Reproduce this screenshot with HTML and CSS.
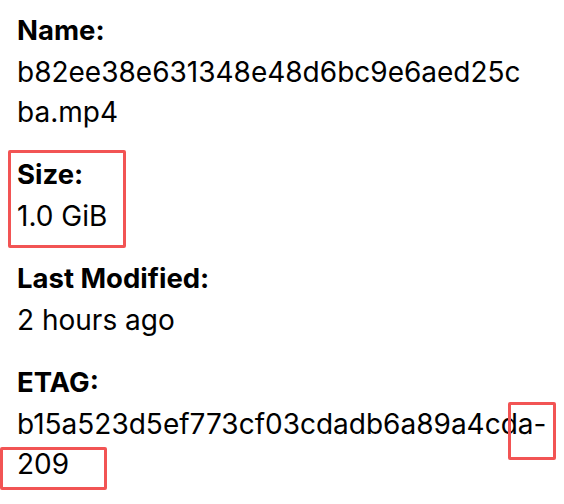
FILE: index.html
```html
<!DOCTYPE html>
<html>
<head>
<meta charset="utf-8">
<link rel="stylesheet" href="styles.css">
</head>
<body>
<div class="panel">
  <dl class="meta">
    <div class="item">
      <dt class="label">Name:</dt>
      <dd class="value value-file">b82ee38e631348e48d6bc9e6aed25cba.mp4</dd>
    </div>
    <div class="item">
      <dt class="label">Size:</dt>
      <dd class="value">1.0 GiB</dd>
    </div>
    <div class="item">
      <dt class="label">Last Modified:</dt>
      <dd class="value">2 hours ago</dd>
    </div>
    <div class="item">
      <dt class="label">ETAG:</dt>
      <dd class="value">b15a523d5ef773cf03cdadb6a89a4cda-209</dd>
    </div>
  </dl>
  <div class="mark mark-size"></div>
  <div class="mark mark-da"></div>
  <div class="mark mark-209"></div>
</div>
</body>
</html>
```
FILE: styles.css
```css
html, body {
  margin: 0;
  padding: 0;
  background: #ffffff;
}

body {
  font-family: Inter, "Noto Sans", sans-serif;
  color: #000000;
}

.panel {
  position: relative;
  width: 564px;
  height: 504px;
  overflow: hidden;
}

.meta {
  margin: 0;
  padding: 10px 0 0 17px;
  width: 536px;
  display: flex;
  flex-direction: column;
  gap: 22px;
}

.item {
  display: flex;
  flex-direction: column;
  gap: 2px;
}

.label {
  font-size: 27.5px;
  line-height: 40px;
  font-weight: 700;
  margin: 0;
}

.value {
  font-size: 28px;
  line-height: 40px;
  margin: 0;
  word-break: break-all;
}

.value-file {
  max-width: 512px;
}

.mark {
  position: absolute;
  border: 3px solid #f25454;
  border-radius: 2px;
  box-sizing: border-box;
}

.mark-size {
  left: 8px;
  top: 150px;
  width: 118px;
  height: 98px;
}

.mark-da {
  left: 508px;
  top: 402px;
  width: 48px;
  height: 58px;
}

.mark-209 {
  left: 0;
  top: 447px;
  width: 107px;
  height: 43px;
}
```
